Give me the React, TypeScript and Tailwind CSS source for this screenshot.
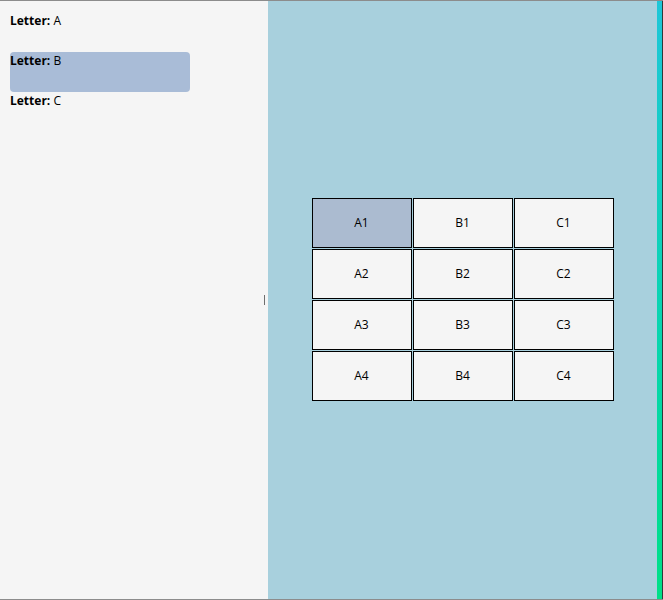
import * as React from "react";

const letters = ["A", "B", "C"];
const rows = [1, 2, 3, 4];
const cols = ["A", "B", "C"];

export default function App() {
  const [selectedLetter, setSelectedLetter] = React.useState("B");
  const [selectedCell, setSelectedCell] = React.useState("A1");

  return (
    <div
      className="flex h-[600px] w-[663px] border-y border-[#8c8c8c] text-[12px] text-black"
      style={{ fontFamily: '"Open Sans", "Noto Sans", sans-serif' }}
    >
      <div className="relative flex w-[268px] shrink-0 flex-col bg-[#f5f5f5] pl-[10px] pt-[11px]">
        {letters.map((letter) => (
          <div
            key={letter}
            onClick={() => setSelectedLetter(letter)}
            className={
              "h-[40px] w-[180px] rounded-[4px] leading-[18px] " +
              (selectedLetter === letter ? "bg-[#a9bcd7]" : "")
            }
          >
            <span className="font-bold">Letter:</span> {letter}
          </div>
        ))}
        <div className="absolute left-[264px] top-[294px] h-[10px] w-px bg-[#6e6e6e]" />
      </div>

      <div className="flex flex-1 items-center justify-center bg-[#a8d0dd] pb-[2px]">
        <div className="grid grid-cols-[repeat(3,100px)] gap-px">
          {rows.map((row) =>
            cols.map((col) => {
              const id = `${col}${row}`;
              return (
                <div
                  key={id}
                  onClick={() => setSelectedCell(id)}
                  className={
                    "flex h-[50px] items-center justify-center border border-black " +
                    (selectedCell === id ? "bg-[#abbbd0]" : "bg-[#f5f5f5]")
                  }
                >
                  {id}
                </div>
              );
            }),
          )}
        </div>
      </div>

      <div className="w-[5px] shrink-0 bg-gradient-to-b from-[#1ec6d8] to-[#00e087]" />
      <div className="w-px shrink-0 bg-[#2f3a3a]" />
    </div>
  );
}
